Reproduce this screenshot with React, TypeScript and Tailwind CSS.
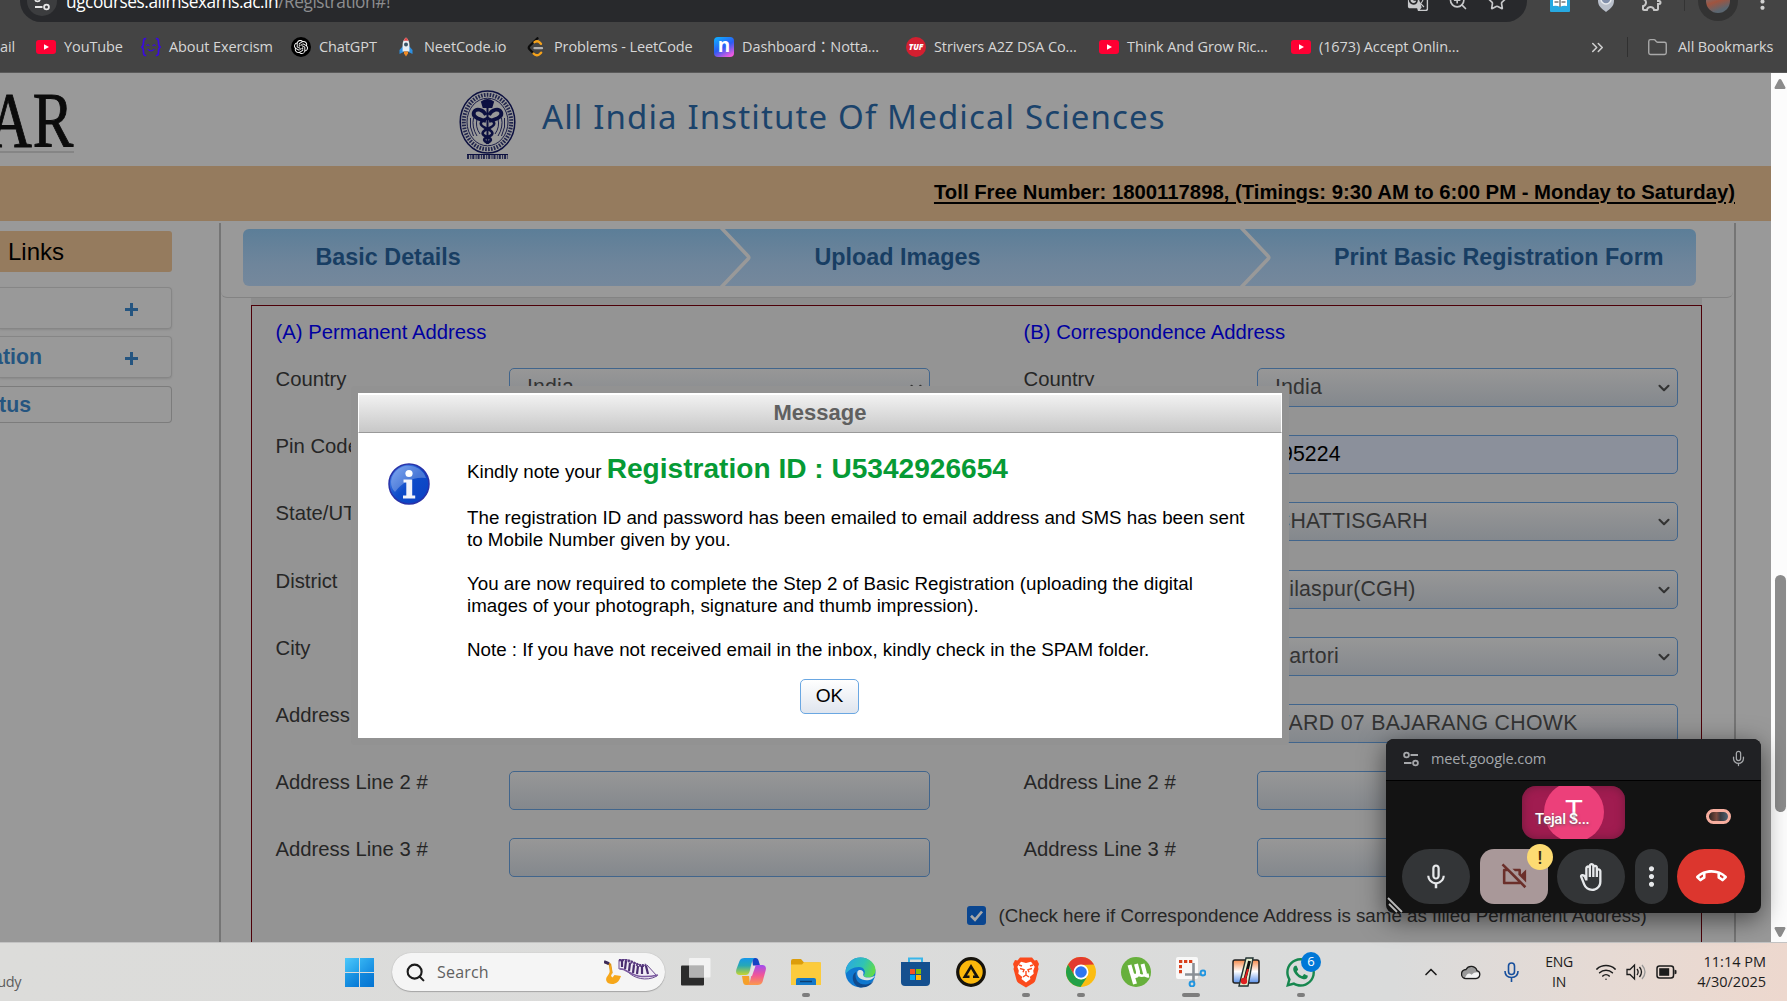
import React from 'react';
import { ChevronDown, ChevronUp, ChevronsRight, Folder, Search, Star, ZoomIn, Mic, Wifi } from 'lucide-react';
import { MdOutlineBackHand, MdOutlineVideocamOff, MdMicNone, MdOutlineCallEnd, MdMoreVert, MdGTranslate, MdOutlineExtension } from 'react-icons/md';
import { SiOpenai } from 'react-icons/si';
import { FaWhatsapp } from 'react-icons/fa';

function Tune({ size, color }: { size: number; color: string }) {
  return (
    <svg width={size} height={size} viewBox="0 0 18 18" fill="none" stroke={color} strokeWidth="1.8">
      <circle cx="4.5" cy="5" r="2.4" />
      <path d="M8.5 5H16M2 13h7.5" />
      <circle cx="13.5" cy="13" r="2.4" />
    </svg>
  );
}

function YouTubeIcon() {
  return (
    <svg width="20" height="20" viewBox="0 0 20 20">
      <rect y="3" width="20" height="14" rx="3" fill="#ff0033" />
      <path d="M8 7.2v5.6L13 10z" fill="#fff" />
    </svg>
  );
}

function ExercismIcon() {
  return (
    <svg width="20" height="20" viewBox="0 0 20 20" fill="none" stroke="#3a0ae0" strokeWidth="1.7" strokeLinecap="round">
      <path d="M4.5 1.5C2.5 1.5 2.5 3 2.5 5c0 3-.3 4.300-1.700 5 1.400.7 1.700 2 1.700 5 0 2 0 3.500 2 3.500" />
      <path d="M15.500 1.500c2 0 2 1.500 2 3.500 0 3 .3 4.300 1.700 5-1.400.7-1.700 2-1.700 5 0 2 0 3.500-2 3.500" />
      <path d="M5.800 8.500q1.200-1.500 2.200 0M12 8.500q1.200-1.500 2.200 0M7 12.300q3 3.200 6 0" strokeWidth="1.200" />
    </svg>
  );
}

function ChatIcon() {
  return (
    <span className="flex h-5 w-5 items-center justify-center rounded-full bg-black text-white">
      <SiOpenai size={14} />
    </span>
  );
}

function RocketIcon() {
  return (
    <svg width="20" height="20" viewBox="0 0 20 20">
      <path d="M7 9l-3.500 4v4l4-2zM13 9l3.500 4v4l-4-2z" fill="#2d8fe0" />
      <path d="M10 .5C7.500 2.500 6.600 5 6.600 8v6.500h6.800V8c0-3-.9-5.500-3.400-7.500z" fill="#e8edf2" />
      <path d="M10 .5C8.700 1.600 8 2.700 7.500 3.800h5C12 2.700 11.300 1.600 10 .5z" fill="#e04545" />
      <circle cx="10" cy="7.500" r="2" fill="#3b5568" />
      <path d="M8 14.500h4v2L10 19.500l-2-3z" fill="#f08a24" />
    </svg>
  );
}

function LeetIcon() {
  return (
    <svg width="20" height="20" viewBox="0 0 20 20" fill="none" strokeWidth="2.300" strokeLinecap="round">
      <path d="M11.500 1.200L3.500 9c-1 1-1 2.300 0 3.300L7 15.800" stroke="#0c0c0c" />
      <path d="M8.500 5.200c2-1.500 3.500-1.200 4.800 0l1.700 1.700M7.500 16.500c2 2.200 4.600 2.200 6 .8l1.700-1.700" stroke="#f5a21b" />
      <path d="M8.500 11.200H16" stroke="#b3b1b0" />
    </svg>
  );
}

function NottaIcon() {
  return (
    <span className="flex h-5 w-5 items-center justify-center rounded bg-[linear-gradient(150deg,#12a5ff_10%,#2b5cf5_50%,#f05ae0_90%)] pb-1 text-[19px] leading-none font-bold text-white">
      n
    </span>
  );
}

function StriverIcon() {
  return (
    <span className="flex h-5 w-5 items-center justify-center rounded-full bg-[#d31f30] text-[8px] font-extrabold italic text-white">TUF</span>
  );
}

const bookmarks = [
  { label: 'YouTube', icon: <YouTubeIcon />, width: 'w-[105px]' },
  { label: 'About Exercism', icon: <ExercismIcon />, width: 'w-[150px]' },
  { label: 'ChatGPT', icon: <ChatIcon />, width: 'w-[105px]' },
  { label: 'NeetCode.io', icon: <RocketIcon />, width: 'w-[130px]' },
  { label: 'Problems - LeetCode', icon: <LeetIcon />, width: 'w-[188px]' },
  { label: 'Dashboard：Notta...', icon: <NottaIcon />, width: 'w-[192px]' },
  { label: 'Strivers A2Z DSA Co...', icon: <StriverIcon />, width: 'w-[193px]' },
  { label: 'Think And Grow Ric...', icon: <YouTubeIcon />, width: 'w-[192px]' },
  { label: '(1673) Accept Onlin...', icon: <YouTubeIcon />, width: 'w-[180px]' },
];

function BrowserChrome() {
  return (
    <header className="flex h-[73px] shrink-0 flex-col overflow-hidden border-b border-[#5a5a5a] bg-[#444444] font-['Open_Sans','Noto_Sans_CJK_JP',sans-serif]">
      <div className="-mt-5 flex h-[42px] shrink-0 items-center pl-5">
        <div className="flex h-full w-[1507px] items-center rounded-full bg-[#28292c] pl-[7px]">
          <span className="flex h-[30px] w-[30px] items-center justify-center rounded-full bg-[#3c3d3f] pt-[4px]">
            <Tune size={18} color="#e8e8e8" />
          </span>
          <span className="ml-[9px] flex-1 pt-[2px] text-[17.300px] tracking-[-0.460px] whitespace-nowrap text-white">
            ugcourses.aiimsexams.ac.in<span className="text-[#8d8e90]">/Registration#!</span>
          </span>
          <span className="flex items-center gap-[19px] pr-[20px] text-[#c8c9cb]">
            <MdGTranslate size={22} />
            <ZoomIn size={20} />
            <Star size={20} />
          </span>
        </div>
        <svg className="ml-[23px]" width="20" height="22" viewBox="0 0 20 22">
          <rect width="20" height="22" rx="1" fill="#27a9e1" />
          <path d="M3 5q4-1 7 1 3-2 7-1v11q-4-1-7 1-3-2-7-1z" fill="#fff" />
          <path d="M10 6v11M4.500 9h4M4.500 12h4M11.500 9h4M11.500 12h4" stroke="#333" />
        </svg>
        <svg className="ml-[26px]" width="20" height="24" viewBox="0 0 20 24">
          <path d="M2 3l8-2 8 2v9c0 5-4 8-8 11-4-3-8-6-8-11z" fill="#b9bfca" />
          <circle cx="10" cy="10" r="5" fill="#8290ab" stroke="#e6e9ee" strokeWidth="1.500" />
        </svg>
        <MdOutlineExtension className="ml-[24px] text-[#c7c7c7]" size={24} />
        <div className="ml-[20px] h-5 w-px bg-[#343434]" />
        <div className="ml-[13px] flex h-[40px] w-[40px] items-center justify-center rounded-full bg-[#333333]">
          <div className="h-6 w-6 rounded-full bg-[linear-gradient(160deg,#6d7680_20%,#a0543f_50%,#5b6670_80%)]" />
        </div>
        <MdMoreVert className="ml-[12px] text-[#d0d0d0]" size={25} />
      </div>
      <div className="flex h-[50px] items-center text-[14.500px] tracking-[-0.100px] whitespace-nowrap text-[#d6d6d6]">
        <span className="w-9 shrink-0 pb-px">ail</span>
        {bookmarks.map((b) => (
          <div key={b.label} className={'flex shrink-0 items-center gap-[8px] ' + b.width}>
            {b.icon}
            <span className="pb-px">{b.label}</span>
          </div>
        ))}
        <ChevronsRight className="ml-[117px] shrink-0 text-[#cfcfcf]" size={19} strokeWidth={2} />
        <div className="ml-[20px] h-5 w-px shrink-0 bg-[#303030]" />
        <Folder className="ml-[19px] shrink-0 text-[#a9a9a9]" size={21} strokeWidth={1.6} />
        <span className="ml-[10px] pb-px">All Bookmarks</span>
      </div>
    </header>
  );
}

function Seal() {
  return (
    <svg width="57" height="70" viewBox="0 0 57 70" fill="none" stroke="#0c1040">
      <ellipse cx="28.500" cy="32" rx="27.300" ry="31" strokeWidth="1.500" />
      <ellipse cx="28.500" cy="32" rx="23.700" ry="27.200" strokeWidth="4" strokeDasharray="1.600 1.300" opacity="0.85" />
      <ellipse cx="28.500" cy="32" rx="20.500" ry="23.800" strokeWidth="0.900" />
      <path d="M23 12q5.500-4 11 0l-1.500 5h-8zM28.500 12v42" fill="#0c1040" strokeWidth="2" />
      <path d="M27 25c-3-6-10-7-12-3s3 7 12 9M30 25c3-6 10-7 12-3s-3 7-12 9" strokeWidth="3.800" />
      <path d="M28.500 28c9 4 9 7 0 11-7 3-6 6 0 8 5 2 4 4 0 6M28.500 28c-9 4-9 7 0 11 7 3 6 6 0 8-5 2-4 4 0 6" strokeWidth="2.600" />
      <path d="M18 29q-2 8 3 15M14.500 28q-2 9 3.500 18M11.500 28q-1.500 9 3 18M39 29q2 8-3 15M42.500 28q2 9-3.500 18M45.500 28q1.500 9-3 18" strokeWidth="0.900" />
      <path d="M8 64.500h41" strokeWidth="1" />
      <path d="M8 67h41" strokeWidth="4" strokeDasharray="2 1.300 1 1" opacity="0.85" />
    </svg>
  );
}

function SiteHeader() {
  return (
    <div className="flex h-[93px] shrink-0 bg-[#999999]">
      <div className="h-full w-[459px] overflow-hidden">
        <div className="mt-[14px] ml-[-12px] h-[66px] w-[86px] border-b-2 border-[#858585]">
          <span className="block origin-left scale-x-[0.77] pt-px font-['Liberation_Serif',serif] text-[79px] leading-[63px] tracking-[1px] whitespace-nowrap text-[#0b0b0b] [-webkit-text-stroke:1px_#0b0b0b]">
            AR
          </span>
        </div>
      </div>
      <div className="pt-[17px]">
        <Seal />
      </div>
      <h1 className="ml-[26px] pt-[21px] font-['Noto_Sans',sans-serif] text-[33px] leading-[46px] tracking-[1.130px] whitespace-nowrap text-[#1b436b]">
        All India Institute Of Medical Sciences
      </h1>
    </div>
  );
}

function Sidebar() {
  return (
    <aside className="w-[218px] shrink-0 overflow-hidden pt-[10px] font-bold text-[#255580]">
      <div className="flex h-[41px] w-[172px] items-center rounded-r-[3px] bg-[#957b5e] pl-[8px] text-[24px] font-normal text-black">Links</div>
      <div className="mt-[15px] flex h-[42px] w-[172px] items-center justify-end rounded-r border border-l-0 border-[#868686] pt-[2px] pr-[33px] shadow-[0_1px_2px_#8a8a8a]">
        <Plus />
      </div>
      <div className="mt-[7px] flex h-[42px] w-[172px] items-center justify-between rounded-r border border-l-0 border-[#868686] pt-[2px] pr-[33px] text-[21.300px] shadow-[0_1px_2px_#8a8a8a]">
        <span className="flex w-[42px] justify-end">Registration</span>
        <Plus />
      </div>
      <div className="mt-[8px] flex h-[37px] w-[172px] items-center rounded-r border border-l-0 border-[#7c7c7c] pt-[2px] text-[21.300px]">
        <span className="flex w-[31px] justify-end">Status</span>
      </div>
    </aside>
  );
}

function Plus() {
  return (
    <svg width="13" height="13" viewBox="0 0 13 13">
      <path d="M6.500 0v13M0 6.500h13" stroke="#255580" strokeWidth="3" />
    </svg>
  );
}

function StepDivider() {
  return (
    <svg width="34" height="61" viewBox="0 0 34 61" className="-my-[2px] shrink-0">
      <path d="M1.500 0L29 29q1.500 1.500 0 3L1.500 61" fill="none" stroke="#999999" strokeWidth="3.600" />
    </svg>
  );
}

function Steps() {
  return (
    <div className="flex h-[76px] w-[1512px] rounded-b-md border-b-[1.500px] border-[#838383] pt-[7px] pl-[22px]">
      <div className="flex h-[57px] w-[1453px] items-center rounded-md bg-[linear-gradient(#5c7e98,#6e859b_60%,#75889c)] text-[23.350px] font-bold whitespace-nowrap text-[#183e63]">
        <span className="w-[476px] pl-[72.500px]">Basic Details</span>
        <StepDivider />
        <span className="w-[486px] pl-[61.500px]">Upload Images</span>
        <StepDivider />
        <span className="pl-[61px]">Print Basic Registration Form</span>
      </div>
    </div>
  );
}

type Row = { label: string; kind: 'select' | 'input' | 'filled'; value: string };

const rows: Row[] = [
  { label: 'Country', kind: 'select', value: 'India' },
  { label: 'Pin Code', kind: 'filled', value: '495224' },
  { label: 'State/UT', kind: 'select', value: 'CHATTISGARH' },
  { label: 'District', kind: 'select', value: 'Bilaspur(CGH)' },
  { label: 'City', kind: 'select', value: 'Sartori' },
  { label: 'Address', kind: 'input', value: 'WARD 07 BAJARANG CHOWK' },
  { label: 'Address Line 2 #', kind: 'input', value: '' },
  { label: 'Address Line 3 #', kind: 'input', value: '' },
];

const fieldStyle = {
  select: 'pl-[17px] bg-[linear-gradient(#979797,#84888d)] text-[#333333] tracking-[0.15px]',
  input: 'pl-[11px] bg-[linear-gradient(#979797,#84888d)] text-[#333333] tracking-[0.3px]',
  filled: 'pl-[11px] bg-[#8b909b] text-black tracking-[0.1px]',
};

function AddressColumn({ title }: { title: string }) {
  return (
    <div className="w-[748px] shrink-0 pl-[23.500px]">
      <div className="h-[62px] pt-[13px] text-[20.300px] leading-[26px] text-[#0000a0]">{title}</div>
      {rows.map((r) => (
        <div key={r.label} className="flex h-[67.200px] text-[20.300px] text-[#262626]">
          <span className="w-[233.500px] leading-[22px]">{r.label}</span>
          <div
            className={
              'flex h-[39px] w-[421px] items-center justify-between rounded-[5px] border border-[#41658c] pt-px pr-[4px] text-[21.300px] ' +
              fieldStyle[r.kind]
            }
          >
            <span>{r.value}</span>
            {r.kind === 'select' && <ChevronDown size={18} strokeWidth={2.800} />}
          </div>
        </div>
      ))}
    </div>
  );
}

function Form() {
  return (
    <div className="ml-[30px] w-[1451px] flex-1 bg-[#8d8d8d] pt-[7px]">
      <div className="h-[660px] border border-[#4d0008] bg-[#949494]">
        <div className="flex">
          <AddressColumn title="(A) Permanent Address" />
          <AddressColumn title="(B) Correspondence Address" />
        </div>
        <div className="mt-[9px] flex h-0 items-center pl-[715px]">
          <svg className="mt-px shrink-0" width="19" height="19" viewBox="0 0 19 19">
            <rect width="19" height="19" rx="3" fill="#0a4690" />
            <path d="M4 9.800l4 4L15 5.500" fill="none" stroke="#a8a8a8" strokeWidth="2.700" />
          </svg>
          <span className="ml-[12.500px] pt-[3px] text-[18.760px] whitespace-nowrap text-[#262626]">
            (Check here if Correspondence Address is same as filled Permanent Address)
          </span>
        </div>
      </div>
    </div>
  );
}

function Message() {
  return (
    <section className="absolute top-[386px] left-[351px] flex h-[359px] w-[938px] flex-col rounded border-7 border-[#929292] bg-white text-[18.750px] leading-[22px] text-black">
      <h2 className="flex h-[40px] shrink-0 items-center justify-center border-t-2 border-r border-b border-l border-t-white border-r-white border-b-[#999] border-l-white bg-[linear-gradient(#f1f1f1,#c8c8c8)] pb-[2px] text-[22px] font-bold text-[#606060]">
        Message
      </h2>
      <div className="flex">
        <svg className="mt-[29px] ml-[29px]" width="44" height="44" viewBox="0 0 44 44">
          <defs>
            <linearGradient id="info" x1="0" y1="0" x2="1" y2="1">
              <stop offset="0" stopColor="#5f93f0" />
              <stop offset="0.500" stopColor="#0e4cc9" />
              <stop offset="1" stopColor="#0b3fc2" />
            </linearGradient>
          </defs>
          <circle cx="22" cy="22" r="20" fill="url(#info)" stroke="#2832a8" strokeWidth="1.500" />
          <path d="M4 20a18 18 0 0 1 35-4Q20 14 8 30Q4 26 4 20z" fill="#fff" opacity="0.25" />
          <circle cx="22" cy="11.500" r="3.600" fill="#fff" />
          <path d="M16.500 17.500h8.700v16h3v3H16v-3h3.300V20.500h-2.800z" fill="#f2f4fa" />
        </svg>
        <div className="ml-[36px] w-[790px] pt-[19px]">
          <p className="leading-[33px]">
            Kindly note your <strong className="text-[28.100px] text-[#069a35]">Registration ID : U5342926654</strong>
          </p>
          <p className="mt-[19px] whitespace-nowrap">
            The registration ID and password has been emailed to email address and SMS has been sent
            <br />
            to Mobile Number given by you.
          </p>
          <p className="mt-[22px] whitespace-nowrap">
            You are now required to complete the Step 2 of Basic Registration (uploading the digital
            <br />
            images of your photograph, signature and thumb impression).
          </p>
          <p className="mt-[22px] whitespace-nowrap">Note : If you have not received email in the inbox, kindly check in the SPAM folder.</p>
        </div>
      </div>
      <button className="mt-[18px] ml-[442px] h-[35px] w-[59px] shrink-0 rounded-[5px] border border-[#6aa7e2] bg-[linear-gradient(#ffffff,#dfe5ee)] pb-[2px] text-[19.200px]">
        OK
      </button>
    </section>
  );
}

function MeetWindow() {
  return (
    <section className="absolute top-[739px] left-[1386px] flex h-[174px] w-[375px] flex-col overflow-hidden rounded-lg bg-[#131313] shadow-[0_6px_26px_rgba(0,0,0,0.55)]">
      <div className="flex h-[42px] items-center border-b border-black bg-[#202124] pr-[14px] pb-[2px] pl-[16px] font-['Open_Sans',sans-serif]">
        <Tune size={18} color="#a6a8ab" />
        <span className="ml-[11px] flex-1 text-[14.500px] tracking-[-0.1px] text-[#a3a7ab]">meet.google.com</span>
        <Mic size={17} color="#a6a8ab" strokeWidth={1.800} />
      </div>
      <div className="mt-[5px] flex h-[53px] items-center pl-[136px]">
        <div className="relative h-[53px] w-[103px] overflow-hidden rounded-[14px] bg-[#a01c50] font-[Roboto,sans-serif] text-white shadow-[inset_0_0_10px_#6f1a3c]">
          <div className="absolute top-[-4px] left-[22px] flex h-[60px] w-[60px] items-center justify-center rounded-full bg-[#ec407a] pb-1 text-[30px]">T</div>
          <span className="absolute top-[22px] left-[13px] text-[15px] leading-[22px] font-medium tracking-[-0.3px] [text-shadow:0_1px_3px_#555]">Tejal S...</span>
        </div>
        <div className="mt-[8px] ml-[81px] h-[15px] w-[25px] rounded-full border-[3px] border-[#f7ae9f] bg-[linear-gradient(90deg,#2b2421,#7a4a3f_40%,#3a3a40_60%,#4d6070)]" />
      </div>
      <div className="mt-[10px] flex h-[55px] pl-[16px] text-[#e6e8ea]">
        <span className="flex w-[68px] items-center justify-center rounded-full bg-[#333537]">
          <MdMicNone size={30} />
        </span>
        <span className="relative ml-[10px] flex w-[68px] items-center justify-center rounded-[14px] bg-[#a99899] text-[#6b2f2a]">
          <MdOutlineVideocamOff size={31} />
          <span className="absolute -top-[5px] left-[47px] flex h-[26px] w-[26px] items-center justify-center rounded-full bg-[#fddb72] font-[Roboto,sans-serif] text-[18px] font-medium text-[#3a2a10]">
            !
          </span>
        </span>
        <span className="ml-[9px] flex w-[68px] items-center justify-center rounded-full bg-[#333537]">
          <MdOutlineBackHand size={28} />
        </span>
        <span className="ml-[10px] flex w-[33px] items-center justify-center rounded-full bg-[#333537]">
          <MdMoreVert size={31} />
        </span>
        <span className="ml-[9px] flex w-[68px] items-center justify-center rounded-full bg-[#dc362e] text-white">
          <MdOutlineCallEnd size={31} />
        </span>
      </div>
      <svg className="absolute bottom-0 left-[1px]" width="17" height="17" viewBox="0 0 17 17">
        <path d="M1 2l14 14M2 8l8 8" stroke="#b5b5b5" strokeWidth="1.800" />
      </svg>
    </section>
  );
}

function TaskView() {
  return (
    <svg width="30" height="30" viewBox="0 0 30 30">
      <rect x="0" y="8.500" width="23" height="20" rx="1" fill="#2b2b2b" />
      <rect x="8" y="1" width="21.500" height="19.500" rx="1" fill="#fafafa" opacity="0.750" />
      <path d="M8 8.500h15v12H8z" fill="#b2b2b2" />
    </svg>
  );
}

function Copilot() {
  return (
    <svg width="30" height="30" viewBox="0 0 30 30">
      <defs>
        <linearGradient id="cpA" x1="0" y1="0" x2="0" y2="1">
          <stop offset="0" stopColor="#1596ea" />
          <stop offset="0.450" stopColor="#27a8b5" />
          <stop offset="1" stopColor="#c9d62c" />
        </linearGradient>
        <linearGradient id="cpB" x1="0" y1="0" x2="0" y2="1">
          <stop offset="0" stopColor="#a04df0" />
          <stop offset="0.500" stopColor="#f0559a" />
          <stop offset="1" stopColor="#fb9a4c" />
        </linearGradient>
      </defs>
      <path d="M16 1h3.500q2.500 0 3.200 3l1.300 4.500h-7z" fill="#1443c4" />
      <path d="M8.500 1H19c-3 1-3.500 6-5 12-1 4-2 5-5 5H4c-4 0-4.500-3-3.500-6L3.500 4C4.200 2 6 1 8.500 1z" fill="url(#cpA)" />
      <path d="M14 28h-4q-2.500 0-3-3l-1-6h7z" fill="#f5a02a" />
      <path d="M21.500 28H11c3-1 3.500-6 5-12 1-5 2-8 5-8h5c4 0 4.500 3 3.500 6l-3 11c-.7 2-2.500 3-5 3z" fill="url(#cpB)" />
      <path d="M16.500 9h3l-3.500 10h-3.500z" fill="#e3e3e3" />
    </svg>
  );
}

function Explorer() {
  return (
    <svg width="30" height="30" viewBox="0 0 30 30">
      <path d="M0 4q0-2 2-2h8l3 3.500h15q2 0 2 2V12H0z" fill="#dc9d0a" />
      <path d="M0 7.500h11l2-2.200h17V28H0z" fill="#fccb3c" />
      <path d="M5 28v-5q0-2 2-2h16q2 0 2 2v5z" fill="#1478c8" />
      <path d="M9 24.500h12" stroke="#0c3f72" strokeWidth="1.500" />
    </svg>
  );
}

function Edge() {
  return (
    <svg width="31" height="31" viewBox="0 0 31 31">
      <defs>
        <linearGradient id="edgeTop" x1="0" y1="0.300" x2="1" y2="0.600">
          <stop offset="0" stopColor="#2ba8e0" />
          <stop offset="0.550" stopColor="#2fc3b5" />
          <stop offset="1" stopColor="#62dc45" />
        </linearGradient>
      </defs>
      <circle cx="15.500" cy="15.500" r="15" fill="#0f78d0" />
      <path d="M.7 13.500C2 5 8.500.5 15.500.5 24 .5 30.500 6.500 30.500 13c0 5-3.500 7.500-7.500 7.500-3 0-5-1-4-2.500 2-3 .5-8-5-8C8 10 3.500 13 .7 17z" fill="url(#edgeTop)" />
      <path d="M11 15c-2 8 3 13 10 12.500 3-.3 5.500-1.500 7.500-4-1 3.500-6 7.200-12.500 7C8 30 5 18 11 15z" fill="#114a8c" />
      <path d="M12.500 14.500c2-3 6.500-1 6 2-1 2.500 1 4.500 6 4 2-.2 4-1 5.500-2-1.500 3.500-4.500 4.800-8.500 4.800-6 0-10.500-4-9-8.800z" fill="#dfe3e4" />
    </svg>
  );
}

function Store() {
  return (
    <svg width="29" height="30" viewBox="0 0 29 30">
      <path d="M8 6V1.500h13V6" fill="none" stroke="#38b6ea" strokeWidth="2" />
      <path d="M0 5h29v20q0 4-4 4H4q-4 0-4-4z" fill="#15508f" />
      <path d="M9 12h5v5H9z" fill="#f35325" />
      <path d="M15 12h5v5h-5z" fill="#81bc06" />
      <path d="M9 18h5v5H9z" fill="#05a6f0" />
      <path d="M15 18h5v5h-5z" fill="#ffba08" />
    </svg>
  );
}

function Player() {
  return (
    <svg width="30" height="30" viewBox="0 0 30 30">
      <circle cx="15" cy="15" r="13.300" fill="#fbb80b" stroke="#16130c" strokeWidth="3.200" />
      <path d="M15 7l8.500 14H17v-2.600h1.800L15 12l-4 6.400h2.500V21h-7z" fill="#16130c" />
    </svg>
  );
}

function Brave() {
  return (
    <svg width="26" height="31" viewBox="0 0 26 31">
      <path d="M7 .5h12l2.500 3 2.500-.5 2 4-1 3 .5 2-3 11q-.5 2-2 3L13 30.500 5.500 26q-1.500-1-2-3L.5 12 1 10 0 7l2-4 2.500.5z" fill="#fb4a1c" />
      <path d="M13 6l5-1.200 3.700 5-1.500 4 .5 3-4 3.200.8 2L13 25.500 8.500 22l.8-2-4-3.200.5-3-1.500-4L8 4.800z" fill="#fff" />
      <path d="M7 11.500l4 1.200-1 2.500M19 11.500l-4 1.200 1 2.500M13 14v4l-3 2M13 18l3 2M6 8l3 1M20 8l-3 1" fill="none" stroke="#fb4a1c" strokeWidth="1.400" />
    </svg>
  );
}

function Chrome() {
  return (
    <svg width="30" height="30" viewBox="0 0 30 30">
      <circle cx="15" cy="15" r="15" fill="#fbbd12" />
      <path d="M2 7.500A15 15 0 0 1 28 7.500L15 8 8.500 18.700z" fill="#e33b2e" />
      <path d="M2 7.500l6.600 11.200L15 22.500l5.500-1.500L14.500 30A15 15 0 0 1 2 7.500z" fill="#23a047" />
      <circle cx="15" cy="15" r="7.500" fill="#fff" />
      <circle cx="15" cy="15" r="5.800" fill="#2f76ee" />
    </svg>
  );
}

function Torrent() {
  return (
    <svg width="30" height="30" viewBox="0 0 30 30">
      <circle cx="15" cy="15" r="15" fill="#67b03c" />
      <path d="M8.500 8L14 27M10.300 15c1.700 5.500 7.200 5.500 6.700-.5L15 7M21.500 7l2.500 9.500q.8 2.600 4 2" fill="none" stroke="#fff" strokeWidth="4" />
      <path d="M17 16q1.500 4 7 2" fill="none" stroke="#fff" strokeWidth="2.500" />
    </svg>
  );
}

function Snip() {
  return (
    <svg width="30" height="30" viewBox="0 0 30 30">
      <rect width="22" height="22" rx="2" fill="#f8f8f8" />
      <path d="M3 4.500h13.500" stroke="#d8401d" strokeWidth="3" strokeDasharray="3.300 1.700" />
      <path d="M4.500 8v9" stroke="#d8401d" strokeWidth="3" strokeDasharray="3.300 1.700" />
      <path d="M17.500 6v19M9 17.500h16" stroke="#8b9096" strokeWidth="2.600" />
      <g fill="none" stroke="#2196e0" strokeWidth="2">
        <circle cx="16" cy="27" r="2.400" />
        <circle cx="27" cy="16" r="2.400" />
      </g>
    </svg>
  );
}

function Thermometer() {
  return (
    <svg width="28" height="30" viewBox="0 0 28 30">
      <defs>
        <linearGradient id="heat" x1="0" y1="0" x2="0" y2="1">
          <stop offset="0" stopColor="#f58a4a" />
          <stop offset="0.500" stopColor="#fff" />
          <stop offset="1" stopColor="#5a90e8" />
        </linearGradient>
      </defs>
      <rect x="1" y="3" width="26" height="23" rx="2" fill="url(#heat)" stroke="#222" strokeWidth="1.500" />
      <path d="M14 1h7l-5 28H7z" fill="#e7efcf" stroke="#233" strokeWidth="1.400" />
      <path d="M17.500 4L13 22" stroke="#111" strokeWidth="3" />
      <path d="M16 12l-3 10" stroke="#e02020" strokeWidth="2" />
      <circle cx="12" cy="24" r="3.200" fill="#e02020" />
    </svg>
  );
}

function WhatsApp() {
  return (
    <span className="relative block text-[#17874f]">
      <FaWhatsapp size={33} />
      <span className="absolute -top-[4px] left-[17px] flex h-[20px] w-[20px] items-center justify-center rounded-full bg-[#0078d7] text-[13px] text-white">6</span>
    </span>
  );
}

const apps = [
  { id: 'taskview', icon: <TaskView />, mark: '' },
  { id: 'copilot', icon: <Copilot />, mark: '' },
  { id: 'explorer', icon: <Explorer />, mark: 'w-2' },
  { id: 'edge', icon: <Edge />, mark: '' },
  { id: 'store', icon: <Store />, mark: '' },
  { id: 'player', icon: <Player />, mark: '' },
  { id: 'brave', icon: <Brave />, mark: 'w-2' },
  { id: 'chrome', icon: <Chrome />, mark: 'w-2' },
  { id: 'torrent', icon: <Torrent />, mark: '' },
  { id: 'snip', icon: <Snip />, mark: 'w-[18px]' },
  { id: 'thermometer', icon: <Thermometer />, mark: '' },
  { id: 'whatsapp', icon: <WhatsApp />, mark: 'w-2' },
];

function MusicArt() {
  return (
    <svg width="55" height="26" viewBox="0 0 55 26">
      <path d="M1 3l5 2.500 1.500 9" fill="none" stroke="#d99116" strokeWidth="2.500" />
      <path d="M0 2.500l5 2.200" stroke="#3b2a5a" strokeWidth="3" />
      <path d="M6.500 6c2 6 2 8 .5 11l1.500 1.500 2-2.500 6.500 1c-2 6-5 8-9 8-5.500 0-7.500-4.500-4.500-8 2-2.500 3-5 2-9.500z" fill="#f6a71a" />
      <path d="M15 1C27-2 33 9 43 6l10 11C42 23 30 19 24 13 20 9 17 10 15 10z" fill="#f2edf6" stroke="#6a4b90" strokeWidth="1" />
      <path d="M15 1c12-2 17 8 27 5" fill="none" stroke="#5b3c82" strokeWidth="3" strokeDasharray="2 1" />
      <path d="M18 1v7M22 2l-1 8M26 4l-1 8M30 6l-1 8M34 7l-1 8M38 7v8M42 7l2 8" stroke="#4a2d70" strokeWidth="2.200" />
      <path d="M16 10c8-1 11 12 38 6" fill="none" stroke="#7b5aa0" strokeWidth="1.500" />
    </svg>
  );
}

function Taskbar() {
  return (
    <footer className="flex h-[59px] shrink-0 border-t border-[#c3c3c3] bg-[linear-gradient(90deg,#dcdcda_0%,#dadbdb_78%,#e6dad4_90%,#edd8ce_100%)] font-['Open_Sans',sans-serif] text-[#1c1c1c]">
      <div className="w-[345px] shrink-0 overflow-hidden pt-[28px]">
        <span className="flex w-[21px] justify-end text-[14.500px] tracking-[-0.4px] text-[#5d5d5d]">study</span>
      </div>
      <div className="grid h-[29px] w-[29px] shrink-0 grid-cols-2 gap-px pt-[15px]">
        <i className="h-[14px] bg-linear-135 from-[#4cc8fb] to-[#1e9ee8]" />
        <i className="h-[14px] bg-linear-135 from-[#35b4f2] to-[#138ae0]" />
        <i className="h-[14px] bg-linear-135 from-[#22a0e8] to-[#0678d6]" />
        <i className="h-[14px] bg-linear-135 from-[#148ade] to-[#0474d2]" />
      </div>
      <div className="mt-[10px] ml-[18px] flex h-[38px] w-[273px] shrink-0 items-center rounded-full bg-[#f5f5f5] pr-[6px] pl-[13px] shadow-[0_1px_1px_#a5a5a5,0_0_1px_#a5a5a5]">
        <Search size={21} strokeWidth={2.400} />
        <span className="ml-[11px] flex-1 text-[16px] tracking-[0.2px] text-[#606060]">Search</span>
        <MusicArt />
      </div>
      <div className="ml-[3px] flex shrink-0">
        {apps.map((a) => (
          <div key={a.id} className="flex w-[55px] flex-col items-center">
            <div className="flex h-[50px] items-center pt-[8px]">{a.icon}</div>
            <div className={'h-1 rounded-full bg-[#7d7d7d] ' + a.mark} />
          </div>
        ))}
      </div>
      <div className="flex h-[58px] flex-1 items-center pl-[93px]">
        <ChevronUp className="shrink-0" size={20} strokeWidth={2} />
        <svg className="ml-[20px] shrink-0" width="20" height="15" viewBox="0 0 20 15">
          <path d="M5 13.500h10a4 4 0 0 0 1-7.800A6 6 0 0 0 5 4.500a4.500 4.500 0 0 0 0 9z" fill="#9a9a9a" stroke="#1c1c1c" strokeWidth="1.300" />
          <path d="M4 12.700q3-6.500 6.500-3 3-3 7-2.200 2 3.500-2.500 5.200z" fill="#f3f3f3" />
        </svg>
        <svg className="ml-[23px] shrink-0" width="15" height="20" viewBox="0 0 15 20" fill="none" stroke="#174f9c" strokeWidth="1.600">
          <rect x="4.500" y="1" width="6" height="11.500" rx="3" />
          <path d="M1 9q0 6.500 6.500 6.500T14 9M7.500 15.500V20" />
        </svg>
        <div className="ml-[16px] w-[48px] shrink-0 text-center text-[14px] leading-[20px] tracking-[-0.3px]">
          ENG
          <br />
          IN
        </div>
        <Wifi className="ml-[12px] shrink-0" size={22} strokeWidth={1.700} />
        <svg className="ml-[9px] shrink-0" width="20" height="18" viewBox="0 0 20 18" fill="none" stroke="#1c1c1c" strokeWidth="1.300">
          <path d="M1 6.500h3L8.500 2v14L4 11.500H1z" />
          <path d="M11 6q2.300 3 0 6M13.500 4q4 5 0 10" />
          <path d="M16 2q6 7 0 14" stroke="#999" />
        </svg>
        <svg className="ml-[10px] shrink-0" width="21" height="14" viewBox="0 0 21 14">
          <rect x="1" y="1" width="16.500" height="12" rx="2.500" fill="none" stroke="#1c1c1c" strokeWidth="1.500" />
          <rect x="3.200" y="3.200" width="10" height="7.600" fill="#1c1c1c" />
          <path d="M18.500 4.500l2 1v3l-2 1z" fill="#1c1c1c" />
        </svg>
        <div className="flex-1 pr-[21px] text-right text-[14.500px] leading-[20px] whitespace-nowrap">
          11:14 PM
          <br />
          4/30/2025
        </div>
      </div>
    </footer>
  );
}

function Scrollbar() {
  return (
    <div className="flex w-4 shrink-0 flex-col items-center bg-[#fcfcfc]">
      <svg className="mt-[6px] ml-[2px]" width="12" height="10" viewBox="0 0 12 10">
        <path d="M6 0q1 0 1.500 1l4 7.500q0 1.500-1 1.500h-9q-1 0-1-1.500l4-7.500Q5 0 6 0z" fill="#8b8b8b" />
      </svg>
      <div className="mt-[486px] ml-[2px] h-[237px] w-[11px] rounded-full bg-[#8b8b8b]" />
      <svg className="mt-[115px] ml-[2px]" width="12" height="10" viewBox="0 0 12 10">
        <path d="M6 10q1 0 1.500-1l4-7.500Q11.500 0 10.500 0h-9Q.5 0 .5 1.500l4 7.500Q5 10 6 10z" fill="#8b8b8b" />
      </svg>
    </div>
  );
}

export default function App() {
  return (
    <div className="relative flex h-[1001px] w-[1787px] flex-col overflow-hidden bg-[#999999] font-['Liberation_Sans',Arial,sans-serif]">
      <BrowserChrome />
      <div className="flex h-[869px] shrink-0 overflow-hidden">
        <main className="flex w-[1771px] shrink-0 flex-col overflow-hidden">
          <SiteHeader />
          <div className="flex h-[55px] shrink-0 items-center justify-end bg-[#957b5e] pr-[36px] pb-[3px] text-[20.320px] font-bold whitespace-nowrap text-black underline decoration-2 underline-offset-[3px]">
            Toll Free Number: 1800117898, (Timings: 9:30 AM to 6:00 PM - Monday to Saturday)
          </div>
          <div className="flex flex-1 overflow-hidden bg-[#999999]">
            <Sidebar />
            <div className="mt-[2px] ml-px flex w-[1517px] shrink-0 flex-col border-x-2 border-[#757575]">
              <div className="-mt-px">
                <Steps />
              </div>
              <Form />
            </div>
          </div>
        </main>
        <Scrollbar />
      </div>
      <Taskbar />
      <Message />
      <MeetWindow />
    </div>
  );
}
